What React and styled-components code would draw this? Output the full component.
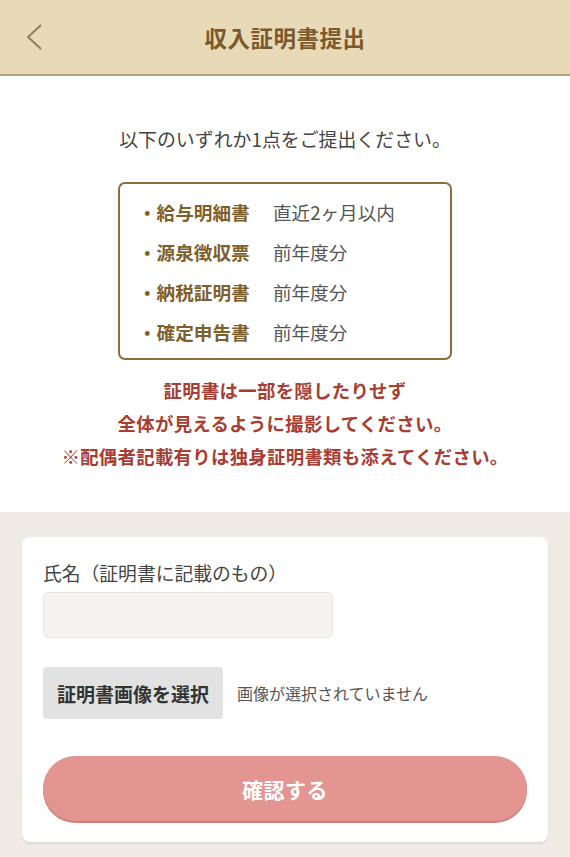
import React from "react";
import styled, { createGlobalStyle } from "styled-components";

const Global = createGlobalStyle`
  html, body { margin: 0; padding: 0; background: #f0ebe5; }
  body { font-family: "Noto Sans CJK JP", "Noto Sans", sans-serif; }
  #root { min-height: 100vh; display: flex; flex-direction: column; }
  * { box-sizing: border-box; }
`;

const Header = styled.header`
  height: 76px;
  background: #e9dab7;
  border-bottom: 2px solid #b3a384;
  display: flex;
  align-items: center;
  justify-content: center;
  position: relative;
`;

const BackButton = styled.button`
  position: absolute;
  left: 20px;
  top: 22px;
  width: 28px;
  height: 30px;
  border: 0;
  background: none;
  padding: 0;
  display: flex;
  align-items: center;
  justify-content: center;
`;

const Title = styled.h1`
  margin: 0;
  font-size: 22.5px;
  font-weight: 700;
  color: #7a5a2c;
  letter-spacing: 0.5px;
`;

const Intro = styled.section`
  background: #fff;
  display: flex;
  flex-direction: column;
  align-items: center;
  padding: 49px 0 39px;
`;

const Lead = styled.p`
  margin: 0;
  font-size: 18.9px;
  line-height: 28px;
  color: #444;
`;

const DocBox = styled.ul`
  list-style: none;
  margin: 29px 0 0;
  width: 334px;
  border: 2px solid #8e6d3c;
  border-radius: 7px;
  padding: 7px 0 7px 18px;
  display: flex;
  flex-direction: column;
`;

const DocRow = styled.li`
  display: flex;
  align-items: center;
  height: 40px;
  font-size: 18.6px;
`;

const DocName = styled.span`
  width: 135px;
  font-weight: 700;
  color: #7f5f2c;
`;

const DocTerm = styled.span`
  color: #555;
`;

const Notice = styled.p`
  margin: 14px 0 0;
  text-align: center;
  font-size: 18.4px;
  line-height: 33px;
  font-weight: 700;
  color: #a83d33;
  letter-spacing: 0.3px;
`;

const FormArea = styled.section`
  flex: 1;
  background: #f0ebe5;
  padding: 25px 22px 14px;
`;

const Card = styled.form`
  background: #fff;
  border-radius: 8px;
  box-shadow: 0 2px 2px rgba(0, 0, 0, 0.08);
  padding: 22px 21px 21px;
  display: flex;
  flex-direction: column;
`;

const Label = styled.label`
  font-size: 18.8px;
  line-height: 28px;
  color: #444;
`;

const TextInput = styled.input`
  margin-top: 5px;
  width: 290px;
  height: 46px;
  background: #f6f4f1;
  border: 1.5px solid #e7e2da;
  border-radius: 6px;
`;

const FileRow = styled.div`
  margin-top: 29px;
  display: flex;
  align-items: center;
  gap: 14px;
`;

const FileButton = styled.button`
  height: 52px;
  padding: 0 14px;
  border: 0;
  border-radius: 4px;
  background: #e2e2e2;
  font-family: inherit;
  font-size: 19px;
  font-weight: 700;
  color: #333;
`;

const FileStatus = styled.span`
  font-size: 16px;
  color: #555;
`;

const Submit = styled.button`
  margin-top: 37px;
  height: 65px;
  border: 0;
  border-radius: 33px;
  background: #e39591;
  box-shadow: 0 2px 0 #cf7e79;
  font-family: inherit;
  font-size: 21px;
  font-weight: 700;
  color: #fff;
  letter-spacing: 0.5px;
`;

const docs = [
  ["給与明細書", "直近2ヶ月以内"],
  ["源泉徴収票", "前年度分"],
  ["納税証明書", "前年度分"],
  ["確定申告書", "前年度分"],
];

export default function App() {
  return (
    <>
      <Global />
      <Header>
        <BackButton aria-label="戻る">
          <svg width="20" height="28" viewBox="0 0 20 28">
            <path d="M17 2 L4 14 L17 26" fill="none" stroke="#8a7a5c" strokeWidth="1.8" />
          </svg>
        </BackButton>
        <Title>収入証明書提出</Title>
      </Header>
      <Intro>
        <Lead>以下のいずれか1点をご提出ください。</Lead>
        <DocBox>
          {docs.map(([name, term]) => (
            <DocRow key={name}>
              <DocName>・{name}</DocName>
              <DocTerm>{term}</DocTerm>
            </DocRow>
          ))}
        </DocBox>
        <Notice>
          証明書は一部を隠したりせず
          <br />
          全体が見えるように撮影してください。
          <br />
          ※配偶者記載有りは独身証明書類も添えてください。
        </Notice>
      </Intro>
      <FormArea>
        <Card onSubmit={(e) => e.preventDefault()}>
          <Label htmlFor="name">氏名（証明書に記載のもの）</Label>
          <TextInput id="name" type="text" />
          <FileRow>
            <FileButton type="button">証明書画像を選択</FileButton>
            <FileStatus>画像が選択されていません</FileStatus>
          </FileRow>
          <Submit type="submit">確認する</Submit>
        </Card>
      </FormArea>
    </>
  );
}
